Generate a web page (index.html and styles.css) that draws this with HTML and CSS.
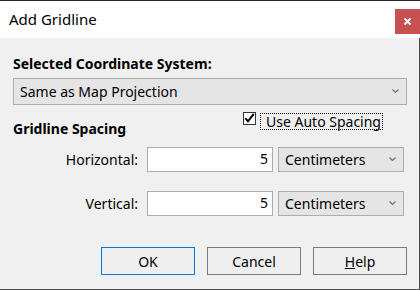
FILE: index.html
```html
<!DOCTYPE html>
<html lang="en">
<head>
    <meta charset="UTF-8">
    <title>Add Gridline</title>
    <link rel="stylesheet" href="styles.css">
</head>
<body>
    <div class="dialog">
        <div class="titlebar">
            <span class="title">Add Gridline</span>
            <span class="close-btn">
                <svg width="9" height="9" viewBox="0 0 9 9"><path d="M1.5 1.5L7.5 7.5M7.5 1.5L1.5 7.5" stroke="#fff" stroke-width="1.8"/></svg>
            </span>
        </div>

        <div class="content">
            <div class="section-label">Selected Coordinate System:</div>
            <div class="combo combo-wide">
                <span>Same as Map Projection</span>
                <svg class="chevron" width="7" height="5" viewBox="0 0 7 5"><path d="M0.5 0.5L3.5 3.5L6.5 0.5" fill="none" stroke="#707070" stroke-width="1.2"/></svg>
            </div>

            <div class="spacing-head">
                <span class="section-label spacing-label">Gridline Spacing</span>
                <label class="check">
                    <span class="check-box">
                        <svg width="11" height="11" viewBox="0 0 11 11"><path d="M1.2 5.2L4 8.3L9.8 0.8" fill="none" stroke="#000" stroke-width="2"/></svg>
                    </span>
                    <span class="check-text">Use Auto Spacing</span>
                </label>
            </div>

            <div class="field-row">
                <span class="field-label">Horizontal:</span>
                <div class="num-box">5</div>
                <div class="combo combo-unit">
                    <span>Centimeters</span>
                    <svg class="chevron" width="7" height="5" viewBox="0 0 7 5"><path d="M0.5 0.5L3.5 3.5L6.5 0.5" fill="none" stroke="#707070" stroke-width="1.2"/></svg>
                </div>
            </div>

            <div class="field-row field-row-2">
                <span class="field-label">Vertical:</span>
                <div class="num-box">5</div>
                <div class="combo combo-unit">
                    <span>Centimeters</span>
                    <svg class="chevron" width="7" height="5" viewBox="0 0 7 5"><path d="M0.5 0.5L3.5 3.5L6.5 0.5" fill="none" stroke="#707070" stroke-width="1.2"/></svg>
                </div>
            </div>

            <div class="buttons">
                <button class="btn btn-default">OK</button>
                <button class="btn">Cancel</button>
                <button class="btn"><u>H</u>elp</button>
            </div>
        </div>
    </div>
</body>
</html>
```

FILE: styles.css
```css
body {
    margin: 0;
    font-family: "Noto Sans", "Open Sans", sans-serif;
    font-size: 14px;
    color: #000;
    background: #f0f0f0;
}

.dialog {
    width: 420px;
    height: 290px;
    display: flex;
    flex-direction: column;
    box-sizing: border-box;
    border-top: 1px solid #262626;
}

.titlebar {
    height: 37px;
    flex: none;
    background: #fff;
    display: flex;
    align-items: flex-start;
    justify-content: space-between;
}

.title {
    font-size: 15px;
    line-height: 20px;
    margin-top: 8px;
    margin-left: 9px;
}

.close-btn {
    width: 25px;
    height: 25px;
    margin-top: 8px;
    background: #c75050;
    display: flex;
    align-items: center;
    justify-content: center;
}

.content {
    flex: 1;
    background: #f0f0f0;
    border-right: 1px solid #4d4d4d;
    border-bottom: 1px solid #4d4d4d;
    padding: 17px 12px 0 13px;
}

.section-label {
    display: block;
    font-weight: bold;
    line-height: 18px;
}

.combo {
    box-sizing: border-box;
    background: #e5e5e5;
    border: 1px solid #adadad;
    display: flex;
    align-items: center;
    justify-content: space-between;
    padding: 0 7px 0 6px;
}

.combo-wide {
    margin-top: 5px;
    height: 27px;
}

.chevron {
    flex: none;
}

.spacing-head {
    display: flex;
    align-items: flex-start;
    margin-top: 6px;
    height: 27px;
}

.spacing-label {
    margin-top: 9px;
    width: 230px;
}

.check {
    display: flex;
    align-items: flex-start;
    margin-top: 1px;
}

.check-box {
    width: 13px;
    height: 13px;
    box-sizing: border-box;
    border: 1px solid #333;
    background: #fff;
    display: flex;
    align-items: center;
    justify-content: center;
}

.check-text {
    margin-left: 4px;
    margin-top: 1px;
    border: 1px dotted #000;
    padding: 0 1px 0 5px;
    line-height: 15px;
}

.field-row {
    display: flex;
    align-items: center;
    margin-top: 9px;
    height: 25px;
}

.field-row-2 {
    margin-top: 19px;
}

.field-label {
    width: 125px;
    text-align: right;
    margin-right: 9px;
}

.num-box {
    box-sizing: border-box;
    width: 126px;
    height: 25px;
    background: #fff;
    border: 1px solid #adadad;
    text-align: right;
    padding-right: 4px;
    line-height: 21px;
}

.combo-unit {
    width: 126px;
    height: 25px;
    margin-left: 5px;
}

.buttons {
    display: flex;
    justify-content: flex-end;
    gap: 12px;
    margin-top: 31px;
}

.btn {
    width: 94px;
    height: 28px;
    box-sizing: border-box;
    background: #efefef;
    border: 1px solid #7a7a7a;
    font-family: inherit;
    font-size: 14px;
    color: #000;
    padding: 0;
}

.btn-default {
    border-color: #0078d7;
}
```
